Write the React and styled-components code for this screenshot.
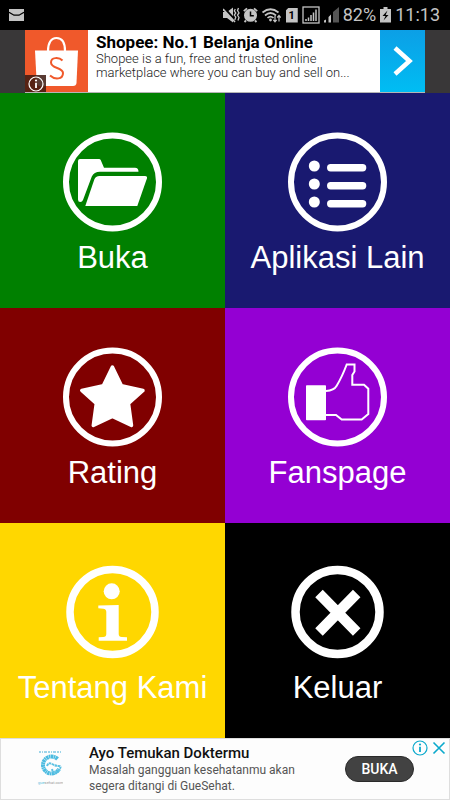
import React from "react";
import styled, { createGlobalStyle } from "styled-components";

const GlobalStyle = createGlobalStyle`
  *, *::before, *::after { box-sizing: border-box; }
  body { margin: 0; background: #000; font-family: Roboto, "Liberation Sans", sans-serif; }
  button { border: 0; padding: 0; margin: 0; background: none; font: inherit; color: inherit; cursor: pointer; }
  a { color: inherit; text-decoration: none; }
  svg { display: block; flex: none; }
`;

const Screen = styled.div`
  display: flex;
  flex-direction: column;
  min-height: 100vh;
`;

const StatusBar = styled.header`
  display: flex;
  align-items: center;
  justify-content: space-between;
  height: 30px;
  padding: 0 10px 0 9px;
  background: #000;
  color: #c4c4c4;
`;

const StatusGroup = styled.div`
  display: flex;
  align-items: center;
  gap: 3px;
`;

const StatusText = styled.span`
  font-size: 18px;
  line-height: 30px;
  white-space: nowrap;
`;

const TopAd = styled.aside`
  display: flex;
  justify-content: center;
  height: 63px;
  padding: 0 25px;
  background: #393738;
`;

const TopAdCard = styled.div`
  display: flex;
  flex: 1;
  min-width: 0;
  background: #fff;
  border-bottom: 1px solid #b5b5b5;
`;

const TopAdLogo = styled.div`
  position: relative;
  width: 63px;
  background: #f0592b;
`;

const AdInfoBadge = styled.button`
  && {
    position: absolute;
    left: 0;
    bottom: 0;
    display: grid;
    place-items: center;
    width: 21px;
    height: 17px;
    background: rgba(60, 25, 15, 0.85);
  }
`;

const TopAdCopy = styled.div`
  flex: 1;
  min-width: 0;
  padding: 2px 0 0 8px;
  white-space: nowrap;
`;

const TopAdTitle = styled.h2`
  margin: 0;
  font-size: 17px;
  font-weight: 700;
  line-height: 20px;
  color: #000;
`;

const TopAdText = styled.p`
  margin: 0;
  font-size: 13px;
  font-weight: 300;
  line-height: 14px;
  color: #222;
`;

const TopAdArrow = styled.a`
  display: grid;
  place-items: center;
  width: 45px;
  background: linear-gradient(#0c9fe6, #00bdf3);
`;

const Menu = styled.main`
  display: grid;
  flex: 1;
  grid-template-columns: 1fr 1fr;
  grid-auto-rows: 1fr;
`;

const Tile = styled.button`
  && {
    display: flex;
    flex-direction: column;
    align-items: center;
    justify-content: flex-start;
    min-height: 190px;
    padding-top: 39px;
    background: ${(p) => p.$color};
    color: #fff;
  }
`;

const TileLabel = styled.span`
  margin-top: 9px;
  font-family: "Liberation Sans", Arial, sans-serif;
  font-size: 31px;
  line-height: 34px;
  white-space: nowrap;
`;

const BottomAd = styled.aside`
  position: relative;
  display: flex;
  align-items: center;
  height: 62px;
  padding: 0 35px 0 36px;
  background: #fdfdfd;
  border: 1px solid #dedede;
`;

const BottomAdCopy = styled.div`
  flex: 1;
  min-width: 0;
  margin-left: 26px;
  white-space: nowrap;
`;

const BottomAdTitle = styled.h2`
  margin: 0;
  font-size: 15px;
  font-weight: 500;
  line-height: 18px;
  color: #111;
`;

const BottomAdText = styled.p`
  margin: 0;
  font-size: 12px;
  line-height: 16px;
  color: #555;
`;

const AdAction = styled.button`
  && {
    width: 69px;
    height: 26px;
    border: 1px solid #2a2a2a;
    border-radius: 13px;
    background: #424242;
    color: #fff;
    font-size: 14px;
    font-weight: 500;
    line-height: 24px;
  }
`;

const AdControls = styled.div`
  position: absolute;
  top: 1px;
  right: 3px;
  display: flex;
  gap: 4px;
`;

const MailIcon = () => (
  <svg width="15" height="12" viewBox="0 0 15 12" aria-hidden="true">
    <rect width="15" height="12" fill="currentColor" />
    <path d="M0 3.200 5 6.200h5L15 3.200" fill="none" stroke="#000" strokeWidth="1.300" />
  </svg>
);

const MuteIcon = () => (
  <svg width="17" height="16" viewBox="0 0 17 16" aria-hidden="true">
    <path d="M0 5h4l6-4.500v15L4 11H0z" fill="currentColor" />
    <path d="M1 1l11 12" stroke="#000" strokeWidth="2.500" />
    <path d="M0 2l12 13" stroke="currentColor" strokeWidth="1.600" />
    <path d="M12.300 2l-1 2 1.500 2-1.500 2 1.500 2-1 3M15.500 1l-1 2.500 1.500 2.500-1.500 2 1.500 2.500-1 3" fill="none" stroke="currentColor" strokeWidth="1.300" />
  </svg>
);

const AlarmIcon = () => (
  <svg width="15" height="16" viewBox="0 0 15 16" aria-hidden="true">
    <circle cx="7.500" cy="8.300" r="6.500" fill="currentColor" />
    <path d="M.8 4.200 4 1.300M14.200 4.200 11 1.300M3 13.500 1.500 15M12 13.500l1.500 1.500" stroke="currentColor" strokeWidth="1.800" />
    <path d="M7.500 4.500v4.300h3.300" fill="none" stroke="#000" strokeWidth="1.500" />
  </svg>
);

const WifiIcon = () => (
  <svg width="20" height="16" viewBox="0 0 20 16" aria-hidden="true">
    <g fill="none" stroke="currentColor" strokeWidth="1.700">
      <path d="M1.500 5.500Q9.500-1 17.500 5.500M4 8.500q5.500-5 11 0M6.500 11q3-2.800 6 0" />
    </g>
    <circle cx="9.500" cy="13" r="1.400" fill="currentColor" />
    <path d="M14 9v5.500M12.300 12.800l1.700 2 1.700-2M18 14.500V9M16.300 10.500l1.700-2 1.700 2" fill="none" stroke="currentColor" strokeWidth="1.200" />
  </svg>
);

const SimShape = styled.span`
  display: grid;
  place-items: center;
  width: 12px;
  height: 15px;
  margin: 0 1px 0 2px;
  background: #c4c4c4;
  clip-path: polygon(3px 0, 100% 0, 100% 100%, 0 100%, 0 3px);
`;

const SimNumber = styled.span`
  color: #000;
  font-size: 11px;
  font-weight: 700;
  line-height: 15px;
`;

const BoxedSignalIcon = () => (
  <svg width="18" height="18" viewBox="0 0 18 18" aria-hidden="true">
    <rect x="1" y="1" width="16" height="16" fill="none" stroke="currentColor" strokeWidth="1.300" />
    <path d="M4 15v-2M6.500 15v-3.500M9 15V9M11.500 15V6.500M14 15V3.500" stroke="currentColor" strokeWidth="1.500" />
  </svg>
);

const SignalIcon = () => (
  <svg width="17" height="16" viewBox="0 0 17 16" aria-hidden="true">
    <path d="M10 5 16 0v15.500h-6z" fill="#555" />
    <path d="M1 15.500v-2l2-1v3zM5.500 15.500V10l2.500-2.500v8z" fill="currentColor" />
  </svg>
);

const BatteryIcon = () => (
  <svg width="13" height="16" viewBox="0 0 13 16" aria-hidden="true">
    <path d="M4.500 0h4v2H12v13.500H1V2h3.500z" fill="currentColor" />
    <path d="M8.500 3.500 3.500 9h3l-2 4.500 5-5.500H6.600z" fill="#000" />
  </svg>
);

const BagIcon = () => (
  <svg width="63" height="62" viewBox="0 0 63 62" aria-hidden="true">
    <path d="M23 21c0-8 3-13 8.500-13S40 13 40 21" fill="none" stroke="#fff" strokeWidth="2.200" />
    <path d="M10 20.500h43L51.500 53q-.3 3-3.500 3H15q-3 0-3.300-3z" fill="#fff" />
    <path d="M37.500 30.500c-3.500-3.500-11.500-3.500-11.500 2 0 6.500 12 4.500 12 10.500 0 6.500-8 7-13 2.500" fill="none" stroke="#f0592b" strokeWidth="2" />
  </svg>
);

const InfoMark = ({ size, color }) => (
  <svg width={size} height={size} viewBox="0 0 16 16" aria-hidden="true">
    <circle cx="8" cy="8" r="7" fill="none" stroke={color} strokeWidth="1.200" />
    <circle cx="8" cy="4.500" r="1.100" fill={color} />
    <path d="M8 6.800v5.200" stroke={color} strokeWidth="1.800" />
  </svg>
);

const ChevronIcon = () => (
  <svg width="22" height="30" viewBox="0 0 22 30" aria-hidden="true">
    <path d="M3 2 17.500 15 3 28" fill="none" stroke="#fff" strokeWidth="4.500" />
  </svg>
);

const CloseMark = () => (
  <svg width="14" height="16" viewBox="0 0 14 16" aria-hidden="true">
    <path d="M1.500 2.500l11 11M12.500 2.500l-11 11" stroke="#0aa9cc" strokeWidth="1.600" />
  </svg>
);

const HealthLogo = () => (
  <svg width="26" height="40" viewBox="0 0 26 40" role="img" aria-label="guesehat.com">
    <path d="M2 3h22" stroke="#7ec8e4" strokeWidth="1.500" strokeDasharray="2 1 1 1 3 1" />
    <path d="M20.500 10a8.500 8.500 0 1 0 1.500 10" fill="none" stroke="#4bbbe0" strokeWidth="4" strokeDasharray="2.500 .4 1.500 .4" />
    <path d="M10 17q1.500-4 5-2t7 2-1 5-6-2" fill="none" stroke="#5cc1e2" strokeWidth="2" strokeDasharray="2.500 .5" />
    <text x="1" y="35" fontFamily="Roboto, sans-serif" fontSize="4" fill="#999">
      <tspan fill="#5bc0df">gue</tspan>sehat.com
    </text>
  </svg>
);

const TileIcon = ({ radius = 46.5, ring = 6, children }) => (
  <svg width="99" height="100" viewBox="0 0 99 100" fill="#fff" aria-hidden="true">
    <circle cx="49.500" cy="50" r={radius} fill="none" stroke="#fff" strokeWidth={ring} />
    {children}
  </svg>
);

const FolderIcon = () => (
  <TileIcon>
    <path d="M17 27H36q1.200 0 1.700 1L41 35.700H72q3.500 0 3.500 4H37q-6 0-8.300 5L20 68q-.8 2-2.700 2-2.300 0-2.300-2.500V29q0-2 2-2z" />
    <path d="M36.500 44H82q2.700 0 1.900 2.500L74.300 74H22.300l9-26.500Q32.500 44 36.500 44z" />
  </TileIcon>
);

const ListIcon = () => (
  <TileIcon>
    {[34, 52, 70].map((y) => (
      <g key={y}>
        <circle cx="26.300" cy={y} r="5.500" />
        <rect x="39" y={y - 2} width="39.300" height="7.400" rx="3.700" />
      </g>
    ))}
  </TileIcon>
);

const StarIcon = () => (
  <TileIcon>
    <path
      d="M49.400 20 58.500 38.700 80 43.500 65.500 56.500 68.500 78.500 49.400 69.300 30.300 78.500 33.300 56.500 18.800 43.500 40.300 38.700z"
      stroke="#fff"
      strokeWidth="3.500"
      strokeLinejoin="round"
    />
  </TileIcon>
);

const ThumbIcon = () => (
  <TileIcon>
    <rect x="18" y="38.300" width="20" height="35" rx=".8" />
    <path
      d="M38 44q8-.5 10.700-5.300Q54 30 58.700 17.500h7.800v7L64.300 28v9.700H76l4.300 4V67l-6.600 5.500h-20L48 68H38"
      fill="none"
      stroke="#fff"
      strokeWidth="2"
    />
  </TileIcon>
);

const AboutIcon = () => (
  <TileIcon radius={42.5} ring={7.5}>
    <circle cx="48.700" cy="29.300" r="8" />
    <path d="M35.300 43.500 55.700 43v29q0 3 3 3.100l5.300.2v3.400H35.700v-3.400l4.600-.3q3-.2 3-3V50q0-3-3-3.300l-5-.4z" />
  </TileIcon>
);

const ExitIcon = () => (
  <TileIcon radius={42} ring={8.5}>
    <path d="M31 31.500 68.700 70M68.700 31.500 31 70" stroke="#fff" strokeWidth="10.500" />
  </TileIcon>
);

const tiles = [
  { label: "Buka", color: "#008000", Icon: FolderIcon },
  { label: "Aplikasi Lain", color: "#191970", Icon: ListIcon },
  { label: "Rating", color: "#800000", Icon: StarIcon },
  { label: "Fanspage", color: "#9400d3", Icon: ThumbIcon },
  { label: "Tentang Kami", color: "#ffd700", Icon: AboutIcon },
  { label: "Keluar", color: "#000000", Icon: ExitIcon },
];

export default function App() {
  return (
    <Screen>
      <GlobalStyle />
      <StatusBar>
        <MailIcon />
        <StatusGroup>
          <MuteIcon />
          <AlarmIcon />
          <WifiIcon />
          <SimShape>
            <SimNumber>1</SimNumber>
          </SimShape>
          <BoxedSignalIcon />
          <SignalIcon />
          <StatusText>82%</StatusText>
          <BatteryIcon />
          <StatusText>11:13</StatusText>
        </StatusGroup>
      </StatusBar>

      <TopAd>
        <TopAdCard>
          <TopAdLogo>
            <BagIcon />
            <AdInfoBadge aria-label="Info iklan">
              <InfoMark size={16} color="#fff" />
            </AdInfoBadge>
          </TopAdLogo>
          <TopAdCopy>
            <TopAdTitle>Shopee: No.1 Belanja Online</TopAdTitle>
            <TopAdText>
              Shopee is a fun, free and trusted online
              <br />
              marketplace where you can buy and sell on...
            </TopAdText>
          </TopAdCopy>
          <TopAdArrow href="#shopee" aria-label="Shopee">
            <ChevronIcon />
          </TopAdArrow>
        </TopAdCard>
      </TopAd>

      <Menu>
        {tiles.map(({ label, color, Icon }) => (
          <Tile key={label} $color={color}>
            <Icon />
            <TileLabel>{label}</TileLabel>
          </Tile>
        ))}
      </Menu>

      <BottomAd>
        <HealthLogo />
        <BottomAdCopy>
          <BottomAdTitle>Ayo Temukan Doktermu</BottomAdTitle>
          <BottomAdText>
            Masalah gangguan kesehatanmu akan
            <br />
            segera ditangi di GueSehat.
          </BottomAdText>
        </BottomAdCopy>
        <AdAction>BUKA</AdAction>
        <AdControls>
          <button aria-label="Info iklan">
            <InfoMark size={16} color="#0aa9cc" />
          </button>
          <button aria-label="Tutup iklan">
            <CloseMark />
          </button>
        </AdControls>
      </BottomAd>
    </Screen>
  );
}
